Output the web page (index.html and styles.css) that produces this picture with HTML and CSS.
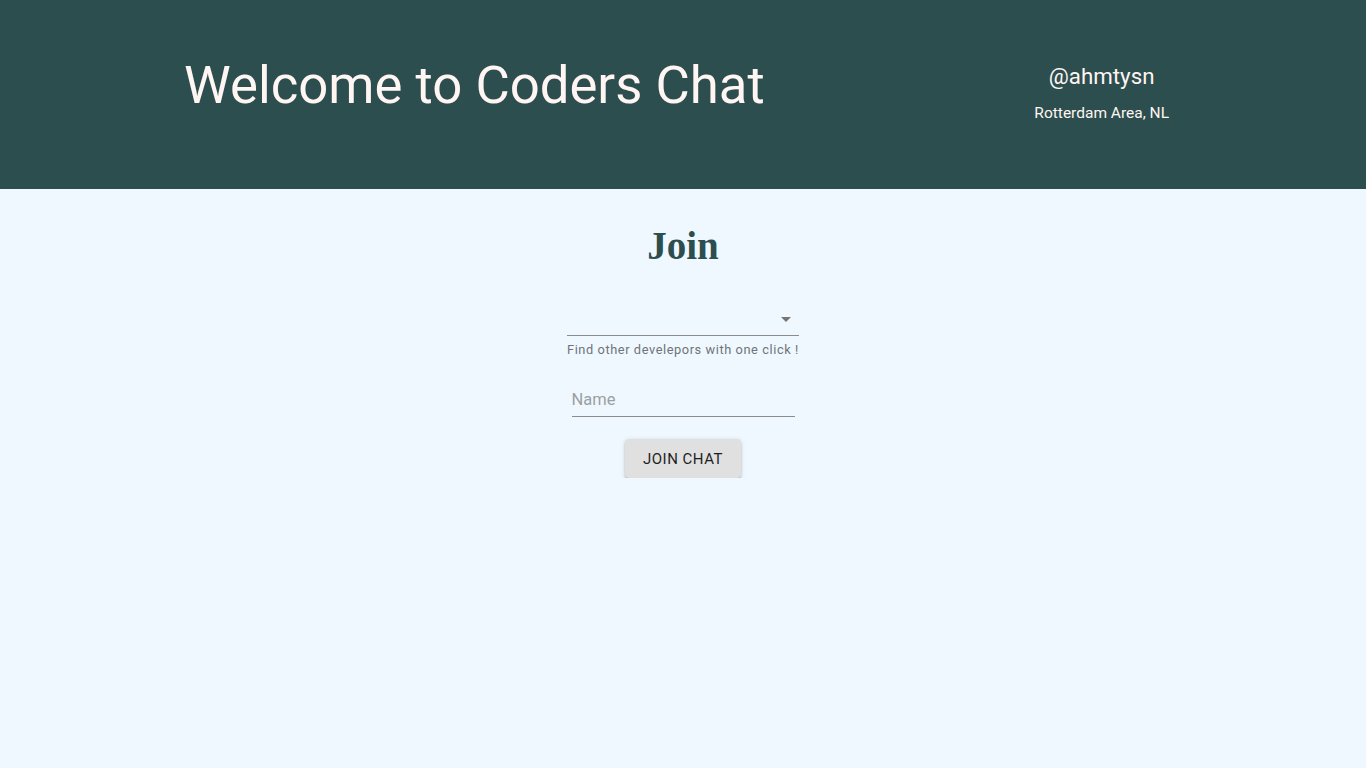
FILE: index.html
```html
<!DOCTYPE html>
<html>
<head>
<meta charset="utf-8">
<link rel="stylesheet" href="styles.css">
</head>
<body>
<header class="header">
  <h2 class="title">Welcome to Coders Chat</h2>
  <div class="user">
    <div class="handle">@ahmtysn</div>
    <div class="location">Rotterdam Area, NL</div>
  </div>
</header>
<main class="main">
  <h1 class="join">Join</h1>
  <div class="select-field">
    <div class="select">
      <span class="select-value"></span>
      <svg class="arrow" width="24" height="24" viewBox="0 0 24 24"><path d="M7 10l5 5 5-5z" fill="#757575"/></svg>
    </div>
    <div class="helper">Find other develepors with one click !</div>
  </div>
  <div class="text-field">
    <input class="input" type="text" placeholder="Name">
  </div>
  <button class="button">JOIN CHAT</button>
</main>
</body>
</html>
```
FILE: styles.css
```css
html, body {
  margin: 0;
  padding: 0;
  background: #f0f8ff;
  font-family: Roboto, "Liberation Sans", sans-serif;
}
.header {
  height: 189px;
  background: #2c4e4e;
  display: flex;
  align-items: flex-start;
  box-sizing: border-box;
  padding: 0 197px 0 184px;
  color: #fff5f3;
}
.title {
  margin: 0;
  padding-top: 50px;
  font-size: 52.7px;
  font-weight: 400;
  line-height: 70px;
  letter-spacing: 0;
}
.user {
  margin-left: auto;
  text-align: center;
  padding-top: 60px;
}
.handle {
  font-size: 22.3px;
  line-height: 32px;
}
.location {
  font-size: 15.5px;
  line-height: 20px;
  margin-top: 11px;
}
.main {
  display: flex;
  flex-direction: column;
  align-items: center;
}
.join {
  font-family: "Liberation Serif", "Times New Roman", serif;
  font-weight: bold;
  font-size: 39px;
  color: #2c4e4e;
  margin: 0;
  margin-top: 35px;
  line-height: 44px;
}
.select-field {
  margin-top: 37px;
  width: 232px;
}
.select {
  height: 30px;
  border-bottom: 1px solid #8c8c8c;
  position: relative;
  box-sizing: content-box;
}
.arrow {
  position: absolute;
  right: 1px;
  top: 2px;
}
.helper {
  margin-top: 6px;
  font-size: 12.8px;
  line-height: 16px;
  letter-spacing: 0.58px;
  color: #6e7479;
  white-space: nowrap;
}
.text-field {
  margin-top: 26px;
  width: 223px;
}
.input {
  width: 100%;
  box-sizing: border-box;
  border: none;
  border-bottom: 1px solid #8c8c8c;
  background: transparent;
  font-family: Roboto, sans-serif;
  font-size: 16.5px;
  padding: 6px 0 7px 0;
  line-height: 19px;
  outline: none;
}
.input::placeholder {
  color: #9aa0a4;
  opacity: 1;
}
.button {
  margin-top: 22px;
  width: 116px;
  height: 39px;
  border: none;
  border-radius: 4px;
  background: #e0e0e0;
  font-family: Roboto, sans-serif;
  font-size: 15px;
  font-weight: 400;
  letter-spacing: 0.5px;
  color: #1f1f1f;
  box-shadow: 0 3px 1px -2px rgba(0,0,0,0.25), 0 2px 2px 0 rgba(0,0,0,0.18), 0 1px 5px 0 rgba(0,0,0,0.14);
}
```
